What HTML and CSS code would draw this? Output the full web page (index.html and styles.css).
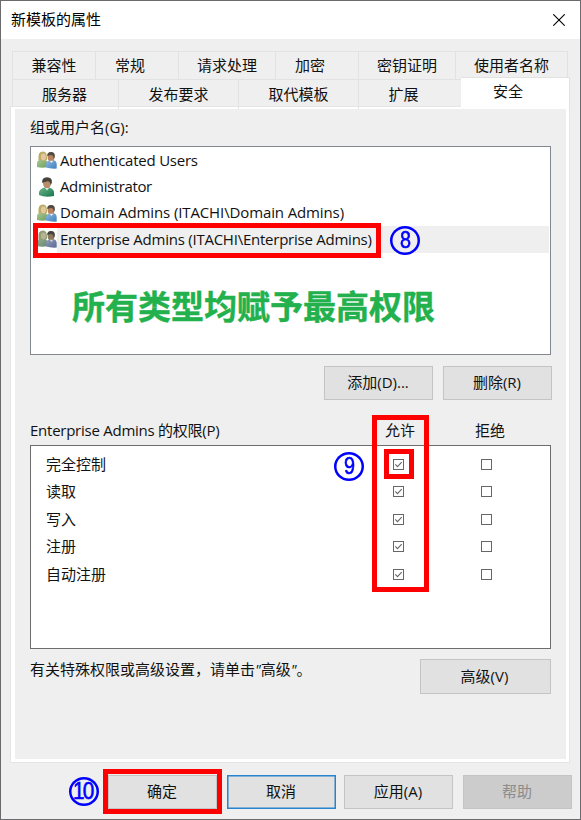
FILE: index.html
```html
<!DOCTYPE html>
<html lang="zh-CN">
<head>
<meta charset="utf-8">
<title>新模板的属性</title>
<link rel="stylesheet" href="styles.css">
</head>
<body>
<svg class="defs" width="0" height="0" aria-hidden="true">
  <defs>
    <linearGradient id="blue" x1="0" y1="0" x2="1" y2="1"><stop offset="0" stop-color="#8fb9df"/><stop offset="1" stop-color="#3f7fbd"/></linearGradient>
    <linearGradient id="green" x1="0" y1="0" x2="1" y2="1"><stop offset="0" stop-color="#a9c795"/><stop offset="1" stop-color="#6f9f5e"/></linearGradient>
    <linearGradient id="teal" x1="0" y1="0" x2="1" y2="1"><stop offset="0" stop-color="#6db58c"/><stop offset="1" stop-color="#17764a"/></linearGradient>
    <symbol id="group" viewBox="0 0 20 18">
      <path d="M0 16V12Q0 9 4 8.500H7Q10 9 10.500 12V16Q5 17.500 0 16Z" fill="url(#green)"/>
      <path d="M1.500 9Q.5 .6 6 .6Q10.500 .6 10 9Q6 10.500 1.500 9Z" fill="#b8ad62"/>
      <ellipse cx="6.400" cy="5.900" rx="2.500" ry="3.400" fill="#e5c69e"/>
      <path d="M9 16.500V12.500Q10 9.500 13 9H16Q19.500 9.500 19.700 13V17.500Q14 18 9 16.500Z" fill="url(#blue)"/>
      <ellipse cx="14" cy="6" rx="3.400" ry="4.400" fill="#b8835f"/>
      <path d="M10.200 5Q10 1 14 .9Q18.300 .8 17.800 6L16.800 8Q16.500 4 14 4Q12 4.500 10.200 5Z" fill="#514b46"/>
      <path d="M12.500 9.700L14.500 12L16.300 9.700Z" fill="#eaf1f7"/>
    </symbol>
    <symbol id="person" viewBox="0 0 20 20">
      <path d="M2 18V15Q3 11.500 7.500 10.500H12Q16.500 11.500 17 15V19Q8 21 2 18Z" fill="url(#teal)"/>
      <ellipse cx="10" cy="6.500" rx="3.900" ry="5" fill="#b98b68"/>
      <path d="M5.200 6Q4.500 .4 10 .2Q15.800 .4 14.800 6L13.800 8Q13 4 10.500 4.200Q8 5 5.200 6Z" fill="#45423b"/>
      <path d="M8 10.900L10 13.500L12 10.900Z" fill="#dcebe1"/>
    </symbol>
    <symbol id="check" viewBox="0 0 11 11">
      <path d="M2.300 5.300L4.500 7.600L8.700 3.200" fill="none" stroke="#666" stroke-width="1.100"/>
    </symbol>
  </defs>
</svg>
<div class="window">
  <header class="titlebar">
    <span class="title">新模板的属性</span>
    <svg class="close" viewBox="0 0 12 12"><path d="M.3.3L11.700 11.700M11.700.3L.3 11.700" stroke="#000" stroke-width="1.100"/></svg>
  </header>
  <nav class="tabs">
    <div class="tab-row tab-row-back">
      <span class="tab">兼容性</span><span class="tab tab-common">常规</span><span class="tab">请求处理</span><span class="tab tab-crypt">加密</span><span class="tab">密钥证明</span><span class="tab">使用者名称</span>
    </div>
    <div class="tab-row tab-row-front">
      <span class="tab">服务器</span><span class="tab">发布要求</span><span class="tab">取代模板</span><span class="tab tab-ext">扩展</span><span class="tab tab-active">安全</span>
    </div>
  </nav>
  <main class="panel">
    <div class="label">组或用户名(G):</div>
    <div class="users">
      <div class="user"><svg class="icon"><use href="#group"/></svg><span class="name auth">Authenticated Users</span></div>
      <div class="user"><svg class="icon person"><use href="#person"/></svg><span class="name admin">Administrator</span></div>
      <div class="user"><svg class="icon"><use href="#group"/></svg><span class="name domain">Domain Admins (ITACHI\Domain Admins)</span></div>
      <div class="user selected"><svg class="icon dim"><use href="#group"/></svg><span class="name enterprise">Enterprise Admins (ITACHI\Enterprise Admins)</span></div>
      <p class="note">所有类型均赋予最高权限</p>
    </div>
    <div class="user-actions"><button>添加(D)...</button><button>删除(R)</button></div>
    <div class="perm-head"><span class="perm-title">Enterprise Admins 的权限(P)</span><span class="allow">允许</span><span class="deny">拒绝</span></div>
    <div class="perms">
      <div class="perm"><span>完全控制</span><i class="box"><svg><use href="#check"/></svg></i><i class="box"></i></div>
      <div class="perm"><span>读取</span><i class="box"><svg><use href="#check"/></svg></i><i class="box"></i></div>
      <div class="perm"><span>写入</span><i class="box"><svg><use href="#check"/></svg></i><i class="box"></i></div>
      <div class="perm"><span>注册</span><i class="box"><svg><use href="#check"/></svg></i><i class="box"></i></div>
      <div class="perm"><span>自动注册</span><i class="box"><svg><use href="#check"/></svg></i><i class="box"></i></div>
    </div>
    <div class="advanced"><span>有关特殊权限或高级设置，请单击<q>"</q>高级<q>"</q>。</span><button>高级(V)</button></div>
  </main>
  <footer class="actions">
    <button>确定</button><button class="focused">取消</button><button>应用(A)</button><button disabled>帮助</button>
  </footer>
  <div class="mark mark-user"></div>
  <div class="mark mark-allow"></div>
  <div class="mark mark-check"></div>
  <div class="mark mark-ok"></div>
  <div class="step step-8"><b>8</b></div>
  <div class="step step-9"><b>9</b></div>
  <div class="step step-10"><b>10</b></div>
</div>
</body>
</html>
```
FILE: styles.css
```css
* { box-sizing: border-box; }
body {
  margin: 0;
  font: 15px/20px "Open Sans", "Noto Sans CJK SC", sans-serif;
  color: #111;
}
.defs { position: absolute; }
.window {
  position: relative;
  width: 581px;
  height: 820px;
  border: 1px solid #6b6b6d;
  background: #efefef;
  overflow: hidden;
}
.titlebar {
  display: flex;
  align-items: center;
  justify-content: space-between;
  height: 38px;
  padding: 0 15px 0 10px;
  background: #fff;
  color: #000;
}
.title { padding-bottom: 2px; }
.close { width: 12px; height: 12px; }
.tabs { padding: 12px 11px 0 11px; }
.tab-row { display: grid; border-left: 1px solid #e2e2e2; }
.tab-row-back { grid-template-columns: 83px 83px 97px 83px 97px 112px; height: 28px; width: 556px; }
.tab-row-front { grid-template-columns: 106px 120px 120px 102px 109px; height: 27px; width: 558px; }
.tab {
  display: flex;
  align-items: center;
  justify-content: center;
  padding-bottom: 2px;
  border-top: 1px solid #e2e2e2;
  border-right: 1px solid #e2e2e2;
}
.tab-row-front .tab { padding-bottom: 2px; }
.tab-row-front .tab:first-child { padding-right: 2px; }
.tab-common { padding-right: 14px; }
.tab-crypt { padding-right: 14px; }
.tab-row-front .tab-ext { padding-right: 13px; border-right: 0; }
.tab-row-front .tab-active {
  z-index: 1;
  height: 32px;
  margin-top: -2px;
  padding-bottom: 6px;
  padding-right: 14px;
  background: #fff;
}
.panel {
  height: 657px;
  margin: 0 10px 0 9px;
  padding: 10px 18px 0 19px;
  border: 1px solid #e5e5e5;
  background: linear-gradient(#efefef, #efefef) 4px 2px / 551px 650px no-repeat #fff;
}
.label { height: 29px; line-height: 20px; }
.users {
  width: 521px;
  height: 209px;
  border: 1px solid #828790;
  background: #fff;
}
.user {
  display: flex;
  align-items: center;
  height: 26.400px;
  margin-left: 6px;
  line-height: 24px;
  white-space: nowrap;
}
.icon { flex: none; width: 20px; height: 18px; }
.person { height: 20px; }
.dim { filter: hue-rotate(20deg) brightness(.88) saturate(.6); }
.name { margin-left: 3px; padding-bottom: 1px; }
.auth { letter-spacing: -.23px; }
.admin { letter-spacing: -.38px; }
.domain { letter-spacing: -.12px; }
.enterprise { letter-spacing: -.24px; }
.perm-title { letter-spacing: -.25px; }
.selected { width: 512px; background: linear-gradient(#efefef, #efefef) 20px 0 no-repeat; }
.note {
  margin: 32px 0 0 41px;
  color: #22b14c;
  font: bold 33px/40px "Noto Sans CJK SC", sans-serif;
  -webkit-text-stroke: .4px #22b14c;
  white-space: nowrap;
}
button {
  flex: none;
  width: 109px;
  height: 34px;
  padding: 0 1px 2px 0;
  border: 1px solid #c4c4c4;
  background: #e1e1e1;
  color: #111;
  font: inherit;
}
.user-actions { display: flex; justify-content: flex-end; gap: 10px; width: 522px; margin-top: 11px; }
.perm-head { display: grid; grid-template-columns: 355px 90px auto; height: 45px; padding-top: 20px; }
.perms {
  width: 521px;
  height: 204px;
  padding-top: 4.500px;
  border: 1px solid #6d6d6d;
  background: #fff;
}
.perm {
  display: grid;
  grid-template-columns: 347px 88px 11px;
  align-items: center;
  height: 27.500px;
  padding-left: 15px;
}
.perm span { padding-bottom: 1px; }
.box { width: 11px; height: 11px; border: 1px solid #666; }
.box svg { display: block; width: 11px; height: 11px; margin: -1px; }
.advanced { display: flex; justify-content: space-between; width: 521px; margin-top: 10px; }
.advanced button { width: 131px; height: 35px; padding-right: 2px; }
q { quotes: none; font-style: italic; }
.actions { display: flex; margin: 12px 0 0 107px; }
.actions button { margin-right: 10px; }
.actions button:nth-child(2) { margin-right: 8px; }
.actions .focused { border: 1px solid #2683cf; box-shadow: inset 0 0 0 .5px #2683cf; }
.actions button:disabled { background: #ccc; border-color: #c4c4c4; color: #8c8c8c; }
.mark { position: absolute; border: 5px solid #f00; }
.mark-user { left: 32px; top: 222px; width: 348px; height: 35px; }
.mark-allow { left: 371px; top: 414px; width: 57px; height: 177px; }
.mark-check { left: 383px; top: 448px; width: 30px; height: 30px; }
.mark-ok { left: 102px; top: 768px; width: 119px; height: 45px; }
.step {
  position: absolute;
  display: flex;
  align-items: center;
  justify-content: center;
  width: 30px;
  height: 29px;
  color: #00f;
  font: 23px/25px "Liberation Sans", sans-serif;
  border-radius: 50%;
  box-shadow: inset 0 0 0 2.500px #00f;
}
.step b { font-weight: normal; -webkit-text-stroke: .6px #00f; transform: scaleX(.86); }
.step-8 { left: 389px; top: 225px; }
.step-9 { left: 333px; top: 451px; }
.step-10 { left: 68px; top: 776px; }
.step-10 b { letter-spacing: -2px; transform: translateX(-1px) scaleX(.9); }
```
